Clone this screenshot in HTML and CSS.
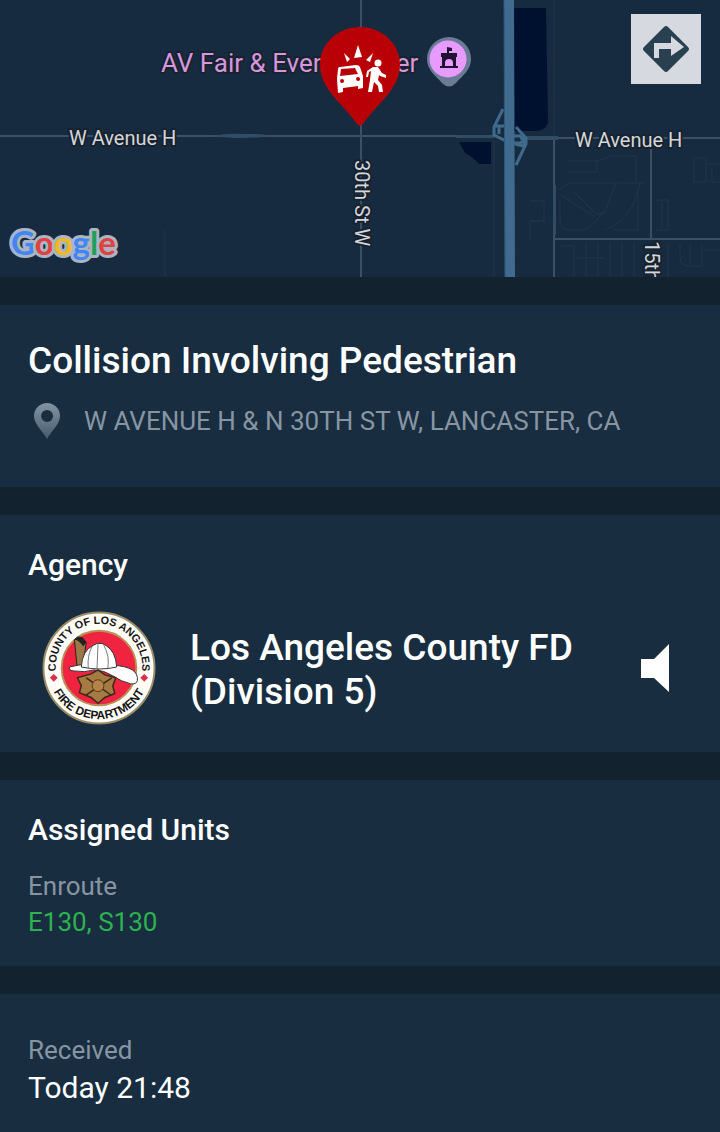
FILE: index.html
```html
<!DOCTYPE html>
<html lang="en">

<head>
  <meta charset="UTF-8" />
  <meta name="viewport" content="width=device-width, initial-scale=1" />
  <title>Collision Involving Pedestrian</title>
  <link rel="stylesheet" href="styles.css">
</head>

<body>
  <div class="map">
    <svg class="map-canvas" viewBox="0 0 720 277" preserveAspectRatio="xMidYMid slice" role="img" aria-label="Incident map">
      <!-- water -->
      <path class="water" d="M514 8h32l2 115q-3 8-13 8h-21z M459 142h32v22h-12q-5-6-14-11z" />

      <!-- small streets -->
      <g class="street">
        <path d="M165 230v47 M554 0v138 M494 140v137 M567 161h30v11h-12M597 161l15-5h24v26 M567 172h18 M558 190l12-7h75 M574 192l22 22h8l12-32 M561 195l34 22 M560 200v20q0 10 10 10h14q10-4 20-20 M606 230c20-10 28-22 34-46 M614 230h24v-40 M530 201h14v20h-14v18 M530 221h14 M656 200h12v30h-12 M662 202v28 M560 246h14v31 M574 258h30 M586 243v34 M598 243v34 M610 243v34 M622 243v34 M634 243v34 M668 244v33 M680 244v14q0 8 10 8h12v-22 M690 244v20 M702 250h18 M694 158h12v24h-12z M706 164h14 M712 168v14h8" />
      </g>

      <!-- roads -->
      <g class="road">
        <path d="M0 136h492 M520 138h200 M361 0v277 M554 138v139 M555 239h165 M651 140v99" />
      </g>
      <path class="road-wide" d="M214 136q12-3 28-2h14q8 0 14 2-12 2-28 2-16 0-28-2z M456 135h38v3h-38z M520 136h38v4h-38z M553 185h3v50h-3z" />

      <!-- highway and ramps -->
      <path class="ramp" d="M503 109l-9 18v8l16 8h8q6 0 6-6 M495 126h11 M499 126v8 M516 127l10 11v6l-10 21 M512 136h8q6 6 3 10l-8-2" />
      <path class="highway" d="M509 0l1 277" />
      <path class="highway-line" d="M504 0l1 277" />

      <!-- labels -->
      <text class="place" x="161" y="72">AV Fair &amp; Event Center</text>
      <text class="label" x="69" y="145">W Avenue H</text>
      <text class="label" x="575" y="147">W Avenue H</text>
      <text class="label" transform="translate(355 160) rotate(90)">30th St W</text>
      <text class="label" transform="translate(645 241) rotate(90)">15th</text>

      <!-- venue pin -->
      <path fill="#6c7b95" d="M449 37a22 22 0 0 1 22 22c0 11-8 16-15 24q-7 7-14 0c-7-8-15-13-15-24a22 22 0 0 1 22-22z" />
      <circle cx="448" cy="59" r="18.500" fill="#e79bff" />
      <path fill="#211332" fill-rule="evenodd" d="M447 47l5 1v3h-3v2h8v4h-1v9h2v2h-18v-2h2v-9h-1v-4h6zM449 59q-4 0-4 4v3h8v-3q0-4-4-4z" />

      <!-- incident pin -->
      <path fill="#b90006" d="M360 27c22 0 40 17 40 37 0 26-23 39-37 60q-3 3-6 0C343 103 320 90 320 64c0-20 18-37 40-37z" />
      <g fill="#fff">
        <path d="M344 53l6 6-3 3z M358 45l4 12-8 1z M373 53l-3 9-4-2z" />
        <path fill-rule="evenodd" d="M338 69q0-2 2-2l16-2q3 0 4 2l3 9v12l-5 1v-3l-15 2v4l-5 1-1-14zM341 69l-1 7 18-2-3-6zM342 79a2 2 0 1 0 .1 4 2 2 0 0 0-.1-4zM358 77a2 2 0 1 0 .1 4 2 2 0 0 0-.1-4z" />
        <circle cx="378" cy="63" r="3.500" />
        <path d="M367 71l6-4h5l4 6 4 2v3l-6-2-1-1-1 5 4 5 1 7h-4l-1-6-4-4-2 10h-4l2-12 1-9-2 1-1 5h-2z" />
      </g>

      <text class="google" x="11" y="255"><tspan fill="#4285f4">G</tspan><tspan fill="#e2413f">o</tspan><tspan fill="#f2b81c">o</tspan><tspan fill="#4285f4">g</tspan><tspan fill="#1fa05a">l</tspan><tspan fill="#e2413f">e</tspan></text>
    </svg>

    <button class="directions" type="button" aria-label="Directions">
      <svg viewBox="0 0 48 48">
        <path fill="#28404f" d="M22 2q2-2 4 0l20 20q2 2 0 4L26 46q-2 2-4 0L2 26q-2-2 0-4z" />
        <path fill="#d6d9e0" d="M12 33V18h17v-7l13 11-13 9v-7H17v9z" />
      </svg>
    </button>
  </div>

  <section class="card incident">
    <h1>Collision Involving Pedestrian</h1>
    <div class="address">
      <svg class="pin" viewBox="0 0 26 36">
        <defs>
          <linearGradient id="pinFill" x1="0" y1="0" x2="0" y2="1">
            <stop offset="0" stop-color="#8493a2" />
            <stop offset="1" stop-color="#475b6d" />
          </linearGradient>
        </defs>
        <path fill="url(#pinFill)" fill-rule="evenodd" d="M13 0a13 13 0 0 1 13 13c0 8-8 14-13 23C8 27 0 21 0 13A13 13 0 0 1 13 0zM13 7a6 6 0 1 0 .1 12A6 6 0 0 0 13 7z" />
      </svg>
      <span>W AVENUE H &amp; N 30TH ST W, LANCASTER, CA</span>
    </div>
  </section>

  <section class="card agency">
    <h2>Agency</h2>
    <div class="agency-row">
      <svg class="seal" viewBox="0 0 116 116" role="img" aria-label="County of Los Angeles Fire Department">
        <defs>
          <path id="sealTop" d="M17 73A44 44 0 1 1 99 73" />
          <path id="sealBottom" d="M6 58a52 52 0 0 0 104 0" />
        </defs>
        <circle cx="58" cy="58" r="56.500" fill="#fffdf6" stroke="#9b8c66" stroke-width="2" />
        <circle cx="58" cy="58" r="38" fill="#f02440" stroke="#b7935a" stroke-width="2" />
        <text class="seal-text"><textPath href="#sealTop" startOffset="50%">COUNTY OF LOS ANGELES</textPath></text>
        <text class="seal-text seal-text-bottom"><textPath href="#sealBottom" startOffset="50%">FIRE DEPARTMENT</textPath></text>
        <path fill="#d8304a" d="M12 64l4 4-4 4-4-4z M104 64l4 4-4 4-4-4z" />
        <!-- helmet -->
        <path fill="#9b7846" stroke="#222" d="M33 29q3-4 8-2l4 5-4 28h-5z" />
        <path fill="#222" d="M33 29q3-4 8-2l4 5-3 4q-4-6-9-7z" />
        <path fill="#fff" stroke="#333" d="M28 57q18-5 43-2 15 1 21 5 6 4 5 11-1 4-7 3-9-2-18-8-9-6-19-6-10 3-20 1-6 0-5-4z" />
        <path fill="#fff" stroke="#333" d="M40 57q1-17 12-22l4-2h5l4 2q10 6 11 22-17 4-36 0z" />
        <path fill="none" stroke="#777" d="M57 33l-1 25 M51 36q-5 9-4 22 M63 35q6 11 4 23" />
        <!-- badge -->
        <path fill="#a57b43" stroke="#3b2917" stroke-width="1.500" d="M57 60l7 5 11 3-3 8 2 8-10 4-7 6-7-6-12-5 2-7-4-8 14-4z" />
        <path fill="none" stroke="#3b2917" stroke-width="1.500" d="M45 68l26 18 M71 68L44 86" />
        <circle cx="57" cy="76" r="6" fill="#b58346" stroke="#5b3b1d" />
      </svg>
      <p class="agency-name">Los Angeles County FD (Division 5)</p>
      <button class="speaker" type="button" aria-label="Listen">
        <svg viewBox="0 0 28 48">
          <path fill="#fff" d="M0 15h13L28 0v48L13 34H0z" />
        </svg>
      </button>
    </div>
  </section>

  <section class="card units">
    <h2>Assigned Units</h2>
    <p class="caption">Enroute</p>
    <p class="unit-list">E130, S130</p>
  </section>

  <section class="card received">
    <p class="caption">Received</p>
    <p class="time">Today 21:48</p>
  </section>
</body>

</html>
```
FILE: styles.css
```css
body {
  font-family: Roboto, "Liberation Sans", sans-serif;
  margin: 0;
  min-height: 100vh;
  display: flex;
  flex-direction: column;
  gap: 28px;
  background-color: #12222e;
  color: #fff;
}

h1,
h2,
p {
  margin: 0;
  font-weight: 400;
}

button {
  border: none;
  padding: 0;
  background: none;
  cursor: pointer;
}

svg {
  display: block;
}

.map {
  position: relative;
  background-color: #172b40;
}

.map-canvas {
  width: 100%;
  height: 277px;
}

.water {
  fill: #00102f;
}

.street {
  fill: none;
  stroke: #20364a;
}

.road {
  fill: none;
  stroke: #3a5063;
  stroke-width: 2;
}

.road-wide {
  fill: #324d63;
}

.ramp {
  fill: none;
  stroke: #3f6a8c;
  stroke-width: 3;
}

.highway {
  stroke: #416a8f;
  stroke-width: 10;
}

.highway-line {
  stroke: #34587a;
}

.label,
.place {
  font-size: 20px;
  fill: #d3d7db;
  stroke: #18222e;
  stroke-width: 4px;
  stroke-linejoin: round;
  paint-order: stroke;
}

.place {
  font-size: 26px;
  fill: #d597dd;
}

.google {
  font-family: Lato, sans-serif;
  font-size: 33px;
  font-weight: 700;
  stroke: #aab4c3;
  stroke-width: 6px;
  stroke-linejoin: round;
  paint-order: stroke;
}

.directions {
  position: absolute;
  top: 14px;
  right: 19px;
  width: 70px;
  height: 70px;
  display: flex;
  align-items: center;
  justify-content: center;
  background-color: #d6d9e0;
}

.directions svg {
  width: 48px;
  height: 48px;
}

.card {
  padding: 32px 28px;
  background-color: #182d3f;
}

.incident {
  padding-bottom: 48px;
}

h1 {
  font-size: 37px;
  line-height: 48px;
  font-weight: 500;
}

h2 {
  font-size: 30px;
  line-height: 36px;
  font-weight: 500;
}

.address {
  display: flex;
  align-items: center;
  gap: 24px;
  margin-top: 18px;
  padding-left: 6px;
  font-size: 26px;
  line-height: 36px;
  color: #8795a3;
}

.pin {
  width: 26px;
  height: 36px;
}

.agency {
  padding-bottom: 27px;
}

.agency-row {
  display: flex;
  align-items: center;
  margin-top: 28px;
  padding: 0 23px 0 14px;
}

.seal {
  width: 114px;
  height: 114px;
  flex-shrink: 0;
}

.seal-text {
  font-family: "Liberation Sans", sans-serif;
  font-size: 11px;
  font-weight: 700;
  fill: #151515;
  text-anchor: middle;
}

.seal-text-bottom {
  font-size: 12px;
}

.agency-name {
  flex: 1;
  margin: 0 34px;
  padding-top: 4px;
  font-size: 37px;
  line-height: 44px;
  font-weight: 500;
}

.speaker svg {
  width: 28px;
  height: 48px;
}

.caption {
  font-size: 26px;
  line-height: 36px;
  color: #8795a3;
}

.units .caption {
  margin-top: 20px;
}

.unit-list {
  font-size: 26px;
  line-height: 36px;
  color: #2cb34f;
}

.units {
  padding-bottom: 26px;
}

.received {
  flex: 1;
  padding-top: 38px;
  padding-bottom: 24px;
}

.time {
  font-size: 30px;
  line-height: 40px;
}
```
